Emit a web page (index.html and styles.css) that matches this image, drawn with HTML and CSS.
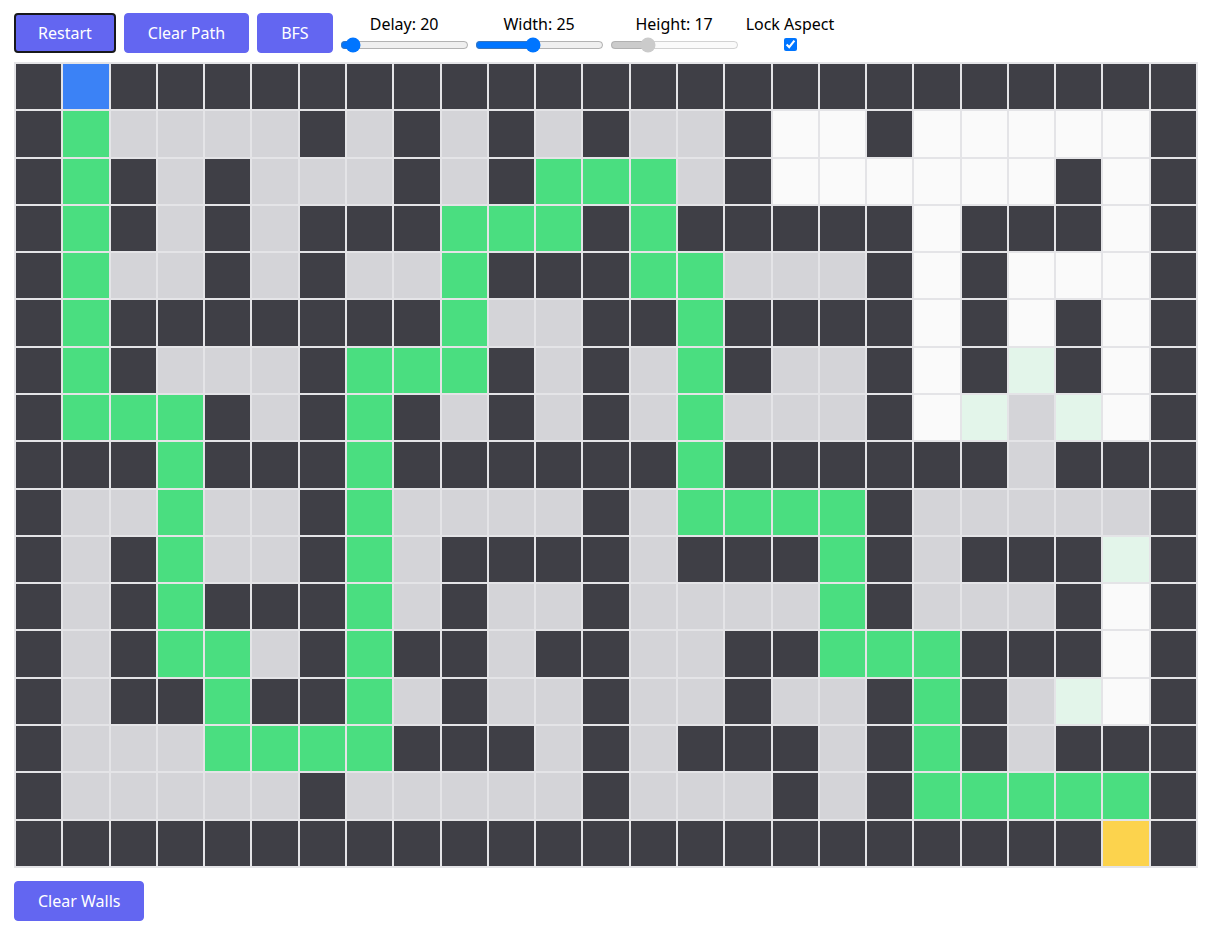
FILE: index.html
```html
<!DOCTYPE html>
<html lang="en">
<head>
<meta charset="utf-8">
<title>Pathfinding Visualizer</title>
<link rel="stylesheet" href="styles.css">
</head>
<body>
<div class="app">
  <div class="toolbar">
    <button class="btn btn-active">Restart</button>
    <button class="btn">Clear Path</button>
    <button class="btn">BFS</button>
    <div class="controls">
      <div class="control">
        <label for="delay">Delay: 20</label>
        <input id="delay" type="range" min="0" max="400" value="20">
      </div>
      <div class="control">
        <label for="width">Width: 25</label>
        <input id="width" type="range" min="5" max="50" value="25">
      </div>
      <div class="control">
        <label for="height">Height: 17</label>
        <input id="height" type="range" min="5" max="50" value="17" disabled>
      </div>
      <div class="control control-check">
        <label for="lock">Lock Aspect</label>
        <input id="lock" type="checkbox" checked>
      </div>
    </div>
  </div>

  <div class="grid">
    <div class="wall"></div><div class="start"></div><div class="wall"></div><div class="wall"></div><div class="wall"></div>
    <div class="wall"></div><div class="wall"></div><div class="wall"></div><div class="wall"></div><div class="wall"></div>
    <div class="wall"></div><div class="wall"></div><div class="wall"></div><div class="wall"></div><div class="wall"></div>
    <div class="wall"></div><div class="wall"></div><div class="wall"></div><div class="wall"></div><div class="wall"></div>
    <div class="wall"></div><div class="wall"></div><div class="wall"></div><div class="wall"></div><div class="wall"></div>

    <div class="wall"></div><div class="path"></div><div class="seen"></div><div class="seen"></div><div class="seen"></div>
    <div class="seen"></div><div class="wall"></div><div class="seen"></div><div class="wall"></div><div class="seen"></div>
    <div class="wall"></div><div class="seen"></div><div class="wall"></div><div class="seen"></div><div class="seen"></div>
    <div class="wall"></div><div class="open"></div><div class="open"></div><div class="wall"></div><div class="open"></div>
    <div class="open"></div><div class="open"></div><div class="open"></div><div class="open"></div><div class="wall"></div>

    <div class="wall"></div><div class="path"></div><div class="wall"></div><div class="seen"></div><div class="wall"></div>
    <div class="seen"></div><div class="seen"></div><div class="seen"></div><div class="wall"></div><div class="seen"></div>
    <div class="wall"></div><div class="path"></div><div class="path"></div><div class="path"></div><div class="seen"></div>
    <div class="wall"></div><div class="open"></div><div class="open"></div><div class="open"></div><div class="open"></div>
    <div class="open"></div><div class="open"></div><div class="wall"></div><div class="open"></div><div class="wall"></div>

    <div class="wall"></div><div class="path"></div><div class="wall"></div><div class="seen"></div><div class="wall"></div>
    <div class="seen"></div><div class="wall"></div><div class="wall"></div><div class="wall"></div><div class="path"></div>
    <div class="path"></div><div class="path"></div><div class="wall"></div><div class="path"></div><div class="wall"></div>
    <div class="wall"></div><div class="wall"></div><div class="wall"></div><div class="wall"></div><div class="open"></div>
    <div class="wall"></div><div class="wall"></div><div class="wall"></div><div class="open"></div><div class="wall"></div>

    <div class="wall"></div><div class="path"></div><div class="seen"></div><div class="seen"></div><div class="wall"></div>
    <div class="seen"></div><div class="wall"></div><div class="seen"></div><div class="seen"></div><div class="path"></div>
    <div class="wall"></div><div class="wall"></div><div class="wall"></div><div class="path"></div><div class="path"></div>
    <div class="seen"></div><div class="seen"></div><div class="seen"></div><div class="wall"></div><div class="open"></div>
    <div class="wall"></div><div class="open"></div><div class="open"></div><div class="open"></div><div class="wall"></div>

    <div class="wall"></div><div class="path"></div><div class="wall"></div><div class="wall"></div><div class="wall"></div>
    <div class="wall"></div><div class="wall"></div><div class="wall"></div><div class="wall"></div><div class="path"></div>
    <div class="seen"></div><div class="seen"></div><div class="wall"></div><div class="wall"></div><div class="path"></div>
    <div class="wall"></div><div class="wall"></div><div class="wall"></div><div class="wall"></div><div class="open"></div>
    <div class="wall"></div><div class="open"></div><div class="wall"></div><div class="open"></div><div class="wall"></div>

    <div class="wall"></div><div class="path"></div><div class="wall"></div><div class="seen"></div><div class="seen"></div>
    <div class="seen"></div><div class="wall"></div><div class="path"></div><div class="path"></div><div class="path"></div>
    <div class="wall"></div><div class="seen"></div><div class="wall"></div><div class="seen"></div><div class="path"></div>
    <div class="wall"></div><div class="seen"></div><div class="seen"></div><div class="wall"></div><div class="open"></div>
    <div class="wall"></div><div class="next"></div><div class="wall"></div><div class="open"></div><div class="wall"></div>

    <div class="wall"></div><div class="path"></div><div class="path"></div><div class="path"></div><div class="wall"></div>
    <div class="seen"></div><div class="wall"></div><div class="path"></div><div class="wall"></div><div class="seen"></div>
    <div class="wall"></div><div class="seen"></div><div class="wall"></div><div class="seen"></div><div class="path"></div>
    <div class="seen"></div><div class="seen"></div><div class="seen"></div><div class="wall"></div><div class="open"></div>
    <div class="next"></div><div class="seen"></div><div class="next"></div><div class="open"></div><div class="wall"></div>

    <div class="wall"></div><div class="wall"></div><div class="wall"></div><div class="path"></div><div class="wall"></div>
    <div class="wall"></div><div class="wall"></div><div class="path"></div><div class="wall"></div><div class="wall"></div>
    <div class="wall"></div><div class="wall"></div><div class="wall"></div><div class="wall"></div><div class="path"></div>
    <div class="wall"></div><div class="wall"></div><div class="wall"></div><div class="wall"></div><div class="wall"></div>
    <div class="wall"></div><div class="seen"></div><div class="wall"></div><div class="wall"></div><div class="wall"></div>

    <div class="wall"></div><div class="seen"></div><div class="seen"></div><div class="path"></div><div class="seen"></div>
    <div class="seen"></div><div class="wall"></div><div class="path"></div><div class="seen"></div><div class="seen"></div>
    <div class="seen"></div><div class="seen"></div><div class="wall"></div><div class="seen"></div><div class="path"></div>
    <div class="path"></div><div class="path"></div><div class="path"></div><div class="wall"></div><div class="seen"></div>
    <div class="seen"></div><div class="seen"></div><div class="seen"></div><div class="seen"></div><div class="wall"></div>

    <div class="wall"></div><div class="seen"></div><div class="wall"></div><div class="path"></div><div class="seen"></div>
    <div class="seen"></div><div class="wall"></div><div class="path"></div><div class="seen"></div><div class="wall"></div>
    <div class="wall"></div><div class="wall"></div><div class="wall"></div><div class="seen"></div><div class="wall"></div>
    <div class="wall"></div><div class="wall"></div><div class="path"></div><div class="wall"></div><div class="seen"></div>
    <div class="wall"></div><div class="wall"></div><div class="wall"></div><div class="next"></div><div class="wall"></div>

    <div class="wall"></div><div class="seen"></div><div class="wall"></div><div class="path"></div><div class="wall"></div>
    <div class="wall"></div><div class="wall"></div><div class="path"></div><div class="seen"></div><div class="wall"></div>
    <div class="seen"></div><div class="seen"></div><div class="wall"></div><div class="seen"></div><div class="seen"></div>
    <div class="seen"></div><div class="seen"></div><div class="path"></div><div class="wall"></div><div class="seen"></div>
    <div class="seen"></div><div class="seen"></div><div class="wall"></div><div class="open"></div><div class="wall"></div>

    <div class="wall"></div><div class="seen"></div><div class="wall"></div><div class="path"></div><div class="path"></div>
    <div class="seen"></div><div class="wall"></div><div class="path"></div><div class="wall"></div><div class="wall"></div>
    <div class="seen"></div><div class="wall"></div><div class="wall"></div><div class="seen"></div><div class="seen"></div>
    <div class="wall"></div><div class="wall"></div><div class="path"></div><div class="path"></div><div class="path"></div>
    <div class="wall"></div><div class="wall"></div><div class="wall"></div><div class="open"></div><div class="wall"></div>

    <div class="wall"></div><div class="seen"></div><div class="wall"></div><div class="wall"></div><div class="path"></div>
    <div class="wall"></div><div class="wall"></div><div class="path"></div><div class="seen"></div><div class="wall"></div>
    <div class="seen"></div><div class="seen"></div><div class="wall"></div><div class="seen"></div><div class="seen"></div>
    <div class="wall"></div><div class="seen"></div><div class="seen"></div><div class="wall"></div><div class="path"></div>
    <div class="wall"></div><div class="seen"></div><div class="next"></div><div class="open"></div><div class="wall"></div>

    <div class="wall"></div><div class="seen"></div><div class="seen"></div><div class="seen"></div><div class="path"></div>
    <div class="path"></div><div class="path"></div><div class="path"></div><div class="wall"></div><div class="wall"></div>
    <div class="wall"></div><div class="seen"></div><div class="wall"></div><div class="seen"></div><div class="wall"></div>
    <div class="wall"></div><div class="wall"></div><div class="seen"></div><div class="wall"></div><div class="path"></div>
    <div class="wall"></div><div class="seen"></div><div class="wall"></div><div class="wall"></div><div class="wall"></div>

    <div class="wall"></div><div class="seen"></div><div class="seen"></div><div class="seen"></div><div class="seen"></div>
    <div class="seen"></div><div class="wall"></div><div class="seen"></div><div class="seen"></div><div class="seen"></div>
    <div class="seen"></div><div class="seen"></div><div class="wall"></div><div class="seen"></div><div class="seen"></div>
    <div class="seen"></div><div class="wall"></div><div class="seen"></div><div class="wall"></div><div class="path"></div>
    <div class="path"></div><div class="path"></div><div class="path"></div><div class="path"></div><div class="wall"></div>

    <div class="wall"></div><div class="wall"></div><div class="wall"></div><div class="wall"></div><div class="wall"></div>
    <div class="wall"></div><div class="wall"></div><div class="wall"></div><div class="wall"></div><div class="wall"></div>
    <div class="wall"></div><div class="wall"></div><div class="wall"></div><div class="wall"></div><div class="wall"></div>
    <div class="wall"></div><div class="wall"></div><div class="wall"></div><div class="wall"></div><div class="wall"></div>
    <div class="wall"></div><div class="wall"></div><div class="wall"></div><div class="end"></div><div class="wall"></div>
  </div>

  <div class="footer">
    <button class="btn">Clear Walls</button>
  </div>
</div>
</body>
</html>
```

FILE: styles.css
```css
* {
  box-sizing: border-box;
}

body {
  margin: 0;
  background: #ffffff;
  color: #000000;
  font-family: "Noto Sans", "Open Sans", sans-serif;
  font-size: 16px;
}

.app {
  padding: 13px 12px 0 14px;
}

.toolbar {
  display: flex;
  align-items: flex-start;
  gap: 8px;
}

.btn {
  height: 40px;
  padding: 0 23px;
  border: 1px solid #6366f1;
  border-radius: 4px;
  background: #6366f1;
  color: #ffffff;
  font-family: "Noto Sans", "Open Sans", sans-serif;
  font-size: 16px;
  cursor: pointer;
}

.btn-active {
  border: 2px solid #18181b;
  padding: 0 22px;
}

.controls {
  display: flex;
  align-items: flex-start;
  gap: 2px;
  margin-left: -3px;
}

.control {
  display: flex;
  flex-direction: column;
  align-items: center;
}

.control label {
  line-height: 22px;
}

.control-check {
  margin-left: 3px;
}

.grid {
  margin-top: 7px;
  display: grid;
  grid-template-columns: repeat(25, 1fr);
  gap: 2px;
  padding: 2px;
  background: #e4e4e7;
}

.grid > div {
  aspect-ratio: 1 / 1;
}

.wall { background: #3f3f46; }
.seen { background: #d4d4d8; }
.open { background: #fafafa; }
.next { background: #e3f5ea; }
.path { background: #4ade80; }
.start { background: #3b82f6; }
.end { background: #fcd34d; }

.footer {
  margin-top: 13px;
}
```
